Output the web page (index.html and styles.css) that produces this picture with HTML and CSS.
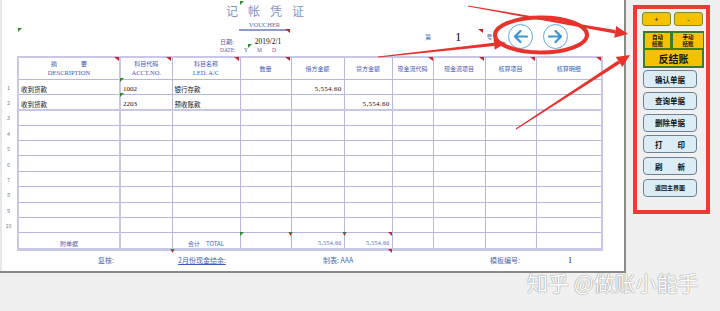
FILE: index.html
```html
<!doctype html>
<html>
  <head>
    <meta charset="utf-8" />
    <link rel="stylesheet" href="styles.css">
  </head>
  <body>
    <div class="screen">
      <div class="sheet">
        <div class="head">
          <div class="head-main">
            <div class="title">记帐凭证</div>
            <div class="voucher-en">VOUCHER</div>
            <div class="date">
              <span>日期:</span>
              <span class="date-val">2019/2/1</span>
            </div>
            <div class="date-en">
              <span class="d-label">DATE:</span>
              <span class="d-y">Y</span>
              <span class="d-m">M</span>
              <span class="d-d">D</span>
            </div>
          </div>
          <div class="head-no">
            <span class="no-label">第</span>
            <span class="no-val">1</span>
            <span class="no-unit">号</span>
            <button class="nav-btn nav-prev" title="上一张">
              <svg width="15" height="13" viewBox="0 0 15 13"><path d="M14 6.5H2M7.5 1L2 6.5L7.5 12" fill="none" stroke="#3a93d3" stroke-width="2.2" stroke-linecap="round" stroke-linejoin="round"/></svg>
            </button>
            <button class="nav-btn nav-next" title="下一张">
              <svg width="15" height="13" viewBox="0 0 15 13"><path d="M1 6.5H13M7.5 1L13 6.5L7.5 12" fill="none" stroke="#3a93d3" stroke-width="2.2" stroke-linecap="round" stroke-linejoin="round"/></svg>
            </button>
          </div>
        </div>

        <table class="voucher">
          <colgroup>
            <col class="c-num"><col class="c-desc"><col class="c-code"><col class="c-name"><col class="c-qty">
            <col class="c-dr"><col class="c-cr"><col class="c-cfc"><col class="c-cfi"><col class="c-item"><col class="c-detail">
          </colgroup>
          <thead>
            <tr class="head-row">
              <th class="num"></th>
              <th class="desc">摘　　　　要<br><span class="en">DESCRIPTION</span></th>
              <th>科目代码<br><span class="en">ACCT.NO.</span></th>
              <th>科目名称<br><span class="en">LED. A/C</span></th>
              <th>数量</th>
              <th>借方金额</th>
              <th>贷方金额</th>
              <th>现金流代码</th>
              <th>现金流项目</th>
              <th>核算项目</th>
              <th>核算明细</th>
            </tr>
          </thead>
          <tbody>
            <tr class="line"><td class="num">1</td><td>收到货款</td><td class="code">1002</td><td>银行存款</td><td></td><td class="amt">5,554.60</td><td></td><td></td><td></td><td></td><td></td></tr>
            <tr class="line sep"><td class="num">2</td><td>收到货款</td><td class="code">2203</td><td>预收账款</td><td></td><td></td><td class="amt">5,554.60</td><td></td><td></td><td></td><td></td></tr>
            <tr class="line"><td class="num">3</td><td></td><td></td><td></td><td></td><td></td><td></td><td></td><td></td><td></td><td></td></tr>
            <tr class="line"><td class="num">4</td><td></td><td></td><td></td><td></td><td></td><td></td><td></td><td></td><td></td><td></td></tr>
            <tr class="line"><td class="num">5</td><td></td><td></td><td></td><td></td><td></td><td></td><td></td><td></td><td></td><td></td></tr>
            <tr class="line"><td class="num">6</td><td></td><td></td><td></td><td></td><td></td><td></td><td></td><td></td><td></td><td></td></tr>
            <tr class="line"><td class="num">7</td><td></td><td></td><td></td><td></td><td></td><td></td><td></td><td></td><td></td><td></td></tr>
            <tr class="line"><td class="num">8</td><td></td><td></td><td></td><td></td><td></td><td></td><td></td><td></td><td></td><td></td></tr>
            <tr class="line"><td class="num">9</td><td></td><td></td><td></td><td></td><td></td><td></td><td></td><td></td><td></td><td></td></tr>
            <tr class="line"><td class="num">10</td><td></td><td></td><td></td><td></td><td></td><td></td><td></td><td></td><td></td><td></td></tr>
            <tr class="total">
              <td class="num"></td>
              <td class="center">附单据</td>
              <td></td>
              <td class="center">合计　TOTAL</td>
              <td></td>
              <td class="amt">5,554.60</td>
              <td class="amt">5,554.60</td>
              <td></td><td></td><td></td><td></td>
            </tr>
          </tbody>
        </table>

        <div class="foot">
          <span class="f-check">复核:</span>
          <span class="f-cash">2月份现金结余:</span>
          <span class="f-maker">制表: AAA</span>
          <span class="f-tpl">模板编号:</span>
          <span class="f-tpl-no">1</span>
        </div>
      </div>

      <div class="side">
        <div class="panel">
          <div class="pm-row">
            <button class="btn-yellow btn-round">+</button>
            <button class="btn-yellow btn-round">-</button>
          </div>
          <div class="close-box">
            <button class="btn-yellow btn-small">自动<br>结账</button>
            <button class="btn-yellow btn-small">手动<br>结账</button>
            <button class="btn-yellow btn-wide">反结账</button>
          </div>
          <div class="btn-list">
            <button class="btn-blue">确认单据</button>
            <button class="btn-blue">查询单据</button>
            <button class="btn-blue">删除单据</button>
            <button class="btn-blue">打　　印</button>
            <button class="btn-blue">刷　　新</button>
            <button class="btn-blue btn-tiny">返回主界面</button>
          </div>
        </div>
      </div>

      <!-- cell comment marks and the red annotations drawn over the sheet -->
      <svg class="overlay" width="720" height="311" viewBox="0 0 720 311">
        <g fill="#2f8a2f">
          <polygon points="18,28 22,28 18,32"/>
          <polygon points="240,1 244,1 240,5"/>
          <polygon points="248,44 252,44 248,48"/>
          <polygon points="120,78 124,78 120,82"/>
          <polygon points="120,93 124,93 120,97"/>
          <polygon points="240,232 244,232 240,236"/>
          <polygon points="288,232 293,232 290.5,234"/>
          <polygon points="342,232 347,232 344.5,234"/>
          <polygon points="170,249 175,249 172.5,251"/>
        </g>
        <g fill="#c8242b">
          <polygon points="285,29 290,29 290,33"/>
          <polygon points="478,29 483,29 483,33"/>
          <polygon points="114,57 119,57 119,61"/>
          <polygon points="166,57 171,57 171,61"/>
          <polygon points="234,57 239,57 239,61"/>
          <polygon points="285,57 290,57 290,61"/>
          <polygon points="428,57 433,57 433,61"/>
          <polygon points="479,57 484,57 484,61"/>
          <polygon points="530,57 535,57 535,61"/>
          <polygon points="596,57 601,57 601,61"/>
          <polygon points="289,233 292,233 290.5,236"/>
          <polygon points="343,233 346,233 344.5,236"/>
          <polygon points="388,232 392,232 392,236"/>
          <polygon points="388,249 392,249 392,253"/>
          <polygon points="171,250 174,250 172.5,253"/>
        </g>
        <g fill="#e8322c">
          <polygon points="467.9,6.5 468.1,5.5 615.5,30 614.9,33.6"/>
          <polygon points="614.2,37.7 616.2,25.9 628,34"/>
          <polygon points="378.05,57.5 377.95,56.5 493.9,42.7 494.3,45.9"/>
          <polygon points="494.7,49.8 493.5,38.8 506,43"/>
          <polygon points="516.3,129.5 515.7,128.5 618.1,60.6 620.1,63.6"/>
          <polygon points="622.4,67.1 615.8,57.1 630,55"/>
        </g>
        <ellipse cx="541" cy="35" rx="46" ry="17.5" fill="none" stroke="#e8322c" stroke-width="4"/>
      </svg>

      <div class="watermark">知乎 @做账小能手</div>
    </div>
  </body>
</html>
```

FILE: styles.css
```css
* {
  box-sizing: border-box;
}
body {
  margin: 0;
  background: #f0f0f0;
  font-family: "Liberation Serif", "Noto Sans CJK SC", serif;
  color: #111;
}
.screen {
  position: relative;
  width: 720px;
  height: 311px;
  display: flex;
  align-items: flex-start;
  overflow: hidden;
}
.sheet {
  flex: none;
  width: 626px;
  height: 273px;
  background: white;
  border-right: 2px solid #8a8a8a;
  border-bottom: 2px solid #8a8a8a;
  box-shadow: inset 2px 0 0 #e8e8e8;
}

/* voucher header */
.head {
  height: 56px;
  display: flex;
}
.head-main {
  width: 420px;
  display: flex;
  flex-direction: column;
  align-items: flex-start;
}
.title {
  margin: 4px 0 0 226px;
  font-family: "Noto Sans CJK SC", sans-serif;
  font-size: 12px;
  line-height: 14px;
  letter-spacing: 10px;
  color: #8593c4;
}
.voucher-en {
  margin: 3px 0 0 239px;
  width: 51px;
  text-align: center;
  font-size: 6.5px;
  line-height: 8px;
  color: #5a6aa8;
  border-bottom: 2px solid #8c9ccc;
}
.date {
  margin: 6px 0 0 220px;
  display: flex;
  align-items: baseline;
  font-family: "Noto Sans CJK SC", sans-serif;
  font-size: 6px;
  line-height: 9px;
  color: #4d62b0;
}
.date-val {
  margin-left: 21px;
  font-family: "Liberation Serif", serif;
  font-size: 7.5px;
  color: #111;
}
.date-en {
  margin-left: 220px;
  display: flex;
  font-size: 5.5px;
  line-height: 9px;
  color: #4d62b0;
}
.d-label {
  width: 24px;
}
.d-y {
  width: 13px;
}
.d-m {
  width: 15px;
}
.head-no {
  display: flex;
  align-items: center;
  height: 25px;
  margin-top: 24px;
  font-family: "Noto Sans CJK SC", sans-serif;
  color: #4d62b0;
}
.no-label {
  margin-left: 5px;
  font-size: 6px;
}
.no-val {
  margin-left: 24px;
  font-family: "Liberation Serif", serif;
  font-size: 13px;
  color: #111;
}
.no-unit {
  margin-left: 25px;
  font-size: 6px;
}
.nav-btn {
  width: 25px;
  height: 25px;
  padding: 0;
  border: 1px solid #63a9d8;
  border-radius: 50%;
  background: white;
  display: flex;
  align-items: center;
  justify-content: center;
}
.nav-prev {
  margin-left: 15px;
}
.nav-next {
  margin-left: 10px;
}

/* voucher table */
.voucher {
  table-layout: fixed;
  border-collapse: collapse;
  width: 602px;
}
.c-num { width: 18px; }
.c-desc { width: 102px; }
.c-code { width: 52px; }
.c-name { width: 68px; }
.c-qty { width: 51px; }
.c-dr { width: 53px; }
.c-cr { width: 48px; }
.c-cfc { width: 41px; }
.c-cfi { width: 52px; }
.c-item { width: 51px; }
.c-detail { width: 66px; }
.voucher th,
.voucher td {
  border: 1px solid #b6b6de;
  padding: 0 2px;
  overflow: hidden;
  white-space: nowrap;
}
.voucher th {
  font-family: "Noto Sans CJK SC", sans-serif;
  font-weight: normal;
  font-size: 6px;
  line-height: 9px;
  color: #4058b8;
  border-top: 2px solid #c8c8e6;
}
.voucher th .en {
  font-family: "Liberation Serif", serif;
  font-size: 6.5px;
}
.head-row {
  height: 22px;
}
.voucher tr > :nth-child(2) {
  border-left: 2px solid #c8c8e6;
  border-right: 2px solid #c8c8e6;
}
.voucher tr > :last-child {
  border-right: 2px solid #c8c8e6;
}
.voucher .num {
  border: none;
  padding: 0;
  text-align: center;
  font-size: 5.5px;
  color: #6c7fb8;
}
.line {
  height: 15.4px;
}
.line td {
  vertical-align: bottom;
  padding-bottom: 1px;
  font-family: "Noto Sans CJK SC", sans-serif;
  font-size: 6.5px;
  line-height: 8px;
}
.line td.num {
  vertical-align: middle;
  padding-top: 2px;
}
.line td.code {
  font-family: "Liberation Serif", serif;
  font-size: 7px;
}
.line.sep td:not(.num) {
  border-bottom: 2px solid #c8c8e6;
}
.amt {
  text-align: right;
  font-family: "Liberation Serif", serif;
  letter-spacing: 0.3px;
}
.line td.amt {
  font-family: "Liberation Serif", serif;
  font-size: 7px;
}
.total {
  height: 17px;
}
.total td {
  vertical-align: bottom;
  padding-bottom: 0;
  font-size: 6.5px;
  line-height: 9px;
  color: #4a62b4;
  border-bottom: 3px solid #c8c8e6;
}
.total td.num {
  border: none;
}
.total .center {
  text-align: center;
  font-family: "Noto Sans CJK SC", sans-serif;
  font-size: 6px;
}
.total .amt {
  font-size: 6px;
}

/* signature line */
.foot {
  display: flex;
  align-items: center;
  height: 18px;
  padding-left: 98px;
  font-family: "Noto Sans CJK SC", sans-serif;
  font-size: 7px;
  color: #4d68b4;
}
.f-check {
  width: 80px;
}
.f-cash {
  width: 145px;
  text-decoration: underline;
  color: #3d5db5;
}
.f-maker {
  width: 167px;
}
.f-tpl {
  width: 78px;
}
.f-tpl-no {
  font-family: "Liberation Serif", serif;
  font-size: 8px;
  color: #111;
}

/* button panel */
.side {
  flex: 1;
  padding: 5px 0 0 7px;
}
.panel {
  width: 77px;
  height: 209px;
  border: 4px solid #ee3a35;
  padding: 3px 2px 0 5px;
  display: flex;
  flex-direction: column;
  font-family: "Noto Sans CJK SC", sans-serif;
}
.panel button {
  padding: 0;
  font-family: inherit;
  color: #111;
  cursor: pointer;
}
.pm-row {
  display: grid;
  grid-template-columns: 29px 29px;
  gap: 3px;
}
.btn-yellow {
  background: #f6c200;
  border: 1px solid #3f7d22;
}
.btn-round {
  height: 14px;
  border-color: #7d8a2a;
  border-radius: 3px;
  font-size: 7px;
  line-height: 1;
}
.close-box {
  display: grid;
  grid-template-columns: 28px 33px;
  margin: 5px 0 0 1px;
  width: 61px;
}
.btn-small {
  height: 18px;
  font-size: 5.5px;
  font-weight: bold;
  line-height: 6.5px;
  border-width: 2px 1px 1px 2px;
}
.btn-wide {
  grid-column: 1 / 3;
  height: 19px;
  font-size: 10px;
  font-weight: bold;
  border-width: 1px 2px 2px 2px;
}
.btn-list {
  display: flex;
  flex-direction: column;
  gap: 3.8px;
  margin: 2px 0 0 1px;
}
.btn-blue {
  width: 54px;
  height: 18px;
  background: #dcecf4;
  border: 1px solid #6f8190;
  border-radius: 4px;
  font-size: 7.5px;
  font-weight: bold;
  white-space: nowrap;
}
.btn-tiny {
  font-size: 6px;
}

.overlay {
  position: absolute;
  left: 0;
  top: 0;
  pointer-events: none;
}
.watermark {
  position: absolute;
  left: 527px;
  top: 269px;
  font-family: "Noto Sans CJK SC", sans-serif;
  font-size: 21px;
  line-height: 26px;
  color: #fdfdfd;
  text-shadow: 0 0 1px #8c8c8c, 0 0 1px #8c8c8c;
  white-space: nowrap;
}
```
